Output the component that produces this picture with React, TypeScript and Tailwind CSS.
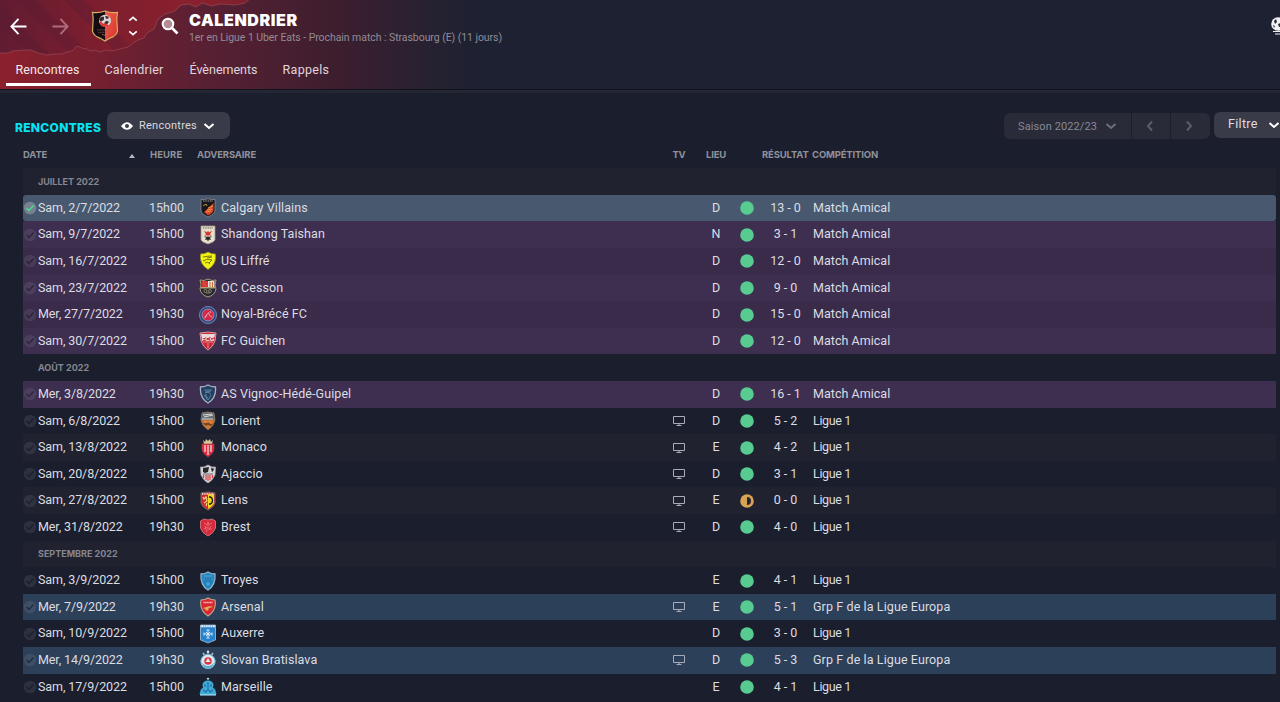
import type { ReactNode } from "react";
import { clsx } from "clsx";

type Tone = "selected" | "friendly" | "europe" | "league";

interface Match {
  date: string;
  time: string;
  club: string;
  tv?: boolean;
  venue: "D" | "E" | "N";
  score: string;
  competition: string;
  tone: Tone;
  draw?: boolean;
}

interface Month {
  label: string;
  /** Position of the month's heading in the striped list. */
  offset: number;
  matches: Match[];
}

const FRIENDLY = "Match Amical";
const LEAGUE = "Ligue 1";
const EUROPA = "Grp F de la Ligue Europa";

const MONTHS: Month[] = [
  {
    label: "JUILLET 2022",
    offset: 0,
    matches: [
      { date: "Sam, 2/7/2022", time: "15h00", club: "Calgary Villains", venue: "D", score: "13 - 0", competition: FRIENDLY, tone: "selected" },
      { date: "Sam, 9/7/2022", time: "15h00", club: "Shandong Taishan", venue: "N", score: "3 - 1", competition: FRIENDLY, tone: "friendly" },
      { date: "Sam, 16/7/2022", time: "15h00", club: "US Liffré", venue: "D", score: "12 - 0", competition: FRIENDLY, tone: "friendly" },
      { date: "Sam, 23/7/2022", time: "15h00", club: "OC Cesson", venue: "D", score: "9 - 0", competition: FRIENDLY, tone: "friendly" },
      { date: "Mer, 27/7/2022", time: "19h30", club: "Noyal-Brécé FC", venue: "D", score: "15 - 0", competition: FRIENDLY, tone: "friendly" },
      { date: "Sam, 30/7/2022", time: "15h00", club: "FC Guichen", venue: "D", score: "12 - 0", competition: FRIENDLY, tone: "friendly" },
    ],
  },
  {
    label: "AOÛT 2022",
    offset: 7,
    matches: [
      { date: "Mer, 3/8/2022", time: "19h30", club: "AS Vignoc-Hédé-Guipel", venue: "D", score: "16 - 1", competition: FRIENDLY, tone: "friendly" },
      { date: "Sam, 6/8/2022", time: "15h00", club: "Lorient", tv: true, venue: "D", score: "5 - 2", competition: LEAGUE, tone: "league" },
      { date: "Sam, 13/8/2022", time: "15h00", club: "Monaco", tv: true, venue: "E", score: "4 - 2", competition: LEAGUE, tone: "league" },
      { date: "Sam, 20/8/2022", time: "15h00", club: "Ajaccio", tv: true, venue: "D", score: "3 - 1", competition: LEAGUE, tone: "league" },
      { date: "Sam, 27/8/2022", time: "15h00", club: "Lens", tv: true, venue: "E", score: "0 - 0", competition: LEAGUE, tone: "league", draw: true },
      { date: "Mer, 31/8/2022", time: "19h30", club: "Brest", tv: true, venue: "D", score: "4 - 0", competition: LEAGUE, tone: "league" },
    ],
  },
  {
    label: "SEPTEMBRE 2022",
    offset: 14,
    matches: [
      { date: "Sam, 3/9/2022", time: "15h00", club: "Troyes", venue: "E", score: "4 - 1", competition: LEAGUE, tone: "league" },
      { date: "Mer, 7/9/2022", time: "19h30", club: "Arsenal", tv: true, venue: "E", score: "5 - 1", competition: EUROPA, tone: "europe" },
      { date: "Sam, 10/9/2022", time: "15h00", club: "Auxerre", venue: "D", score: "3 - 0", competition: LEAGUE, tone: "league" },
      { date: "Mer, 14/9/2022", time: "19h30", club: "Slovan Bratislava", tv: true, venue: "D", score: "5 - 3", competition: EUROPA, tone: "europe" },
      { date: "Sam, 17/9/2022", time: "15h00", club: "Marseille", venue: "E", score: "4 - 1", competition: LEAGUE, tone: "league" },
    ],
  },
];

const SHIELD = "M2 1.5Q5.5 2 9 .8Q12.500 2 16 1.500L16 12Q16 16 9 19Q2 16 2 12Z";

/** Club crests, all drawn on an 18x20 box. */
const CRESTS: Record<string, ReactNode> = {
  "Calgary Villains": (
    <>
      <path d={SHIELD} fill="#17171b" stroke="#85808a" strokeWidth=".9" />
      <path d="M14.500 5V12Q14 15 9 17.500L5 14Z" fill="#d9442d" />
      <path d="M4 3h10" stroke="#b9aeb0" strokeWidth="1.200" strokeDasharray="1 .7" />
      <path d="M4 8l3-2 1 2M9 10l5-2M8 12l5-1M7 14l5-1" stroke="#f2b04a" strokeWidth=".8" fill="none" />
    </>
  ),
  "Shandong Taishan": (
    <>
      <path d="M2 1h14v14l-2 2-5 2-5-2-2-2z" fill="#e7dfcd" stroke="#9b927b" strokeWidth=".8" />
      <path d="M4 3h10" stroke="#4c473f" strokeWidth="1" strokeDasharray="1 .7" />
      <path d="M5 5.500l3 2 1-2 1 2 3-2-2 4 2 1H5l2-1z" fill="#d5342f" />
      <path d="M5 11l3 1 1-1 1 1 3-1-2 2 1 2-2-.5-1 2-1-2-2 .5 1-2z" fill="#292728" />
    </>
  ),
  "US Liffré": (
    <>
      <path d="M1.500 3Q6 3 9 1Q12 3 16.500 3Q18 13 9 18.500Q0 13 1.500 3Z" fill="#f2f215" stroke="#8c8d22" strokeWidth=".8" />
      <path d="M4 6q5-1 9-1M4 10q4-3 9-1l-3 3M6 12q3-2 5 1M8 7l5-1" stroke="#55580d" strokeWidth=".8" fill="none" />
    </>
  ),
  "OC Cesson": (
    <>
      <path d="M1 2l4 .5L9 1l4 1.500L17 2l-1 5 1 4q-1 6-8 8-7-2-8-8l1-4z" fill="#242736" stroke="#a69a73" strokeWidth="1" />
      <path d="M2.500 3H9v6H2.500z" fill="#d93438" />
      <path d="M9 3h6.500v6H9z" fill="#e6dfd5" />
      <path d="M4 4l3 4M11 4v5M13.500 4v5" stroke="#d3643e" />
      <path d="M2 9h14v1.500H2z" fill="#b6a26a" />
      <path d="M5 13a1.500 1.500 0 103 0 1.500 1.500 0 10-3 0M9.500 13a1.500 1.500 0 103 0 1.500 1.500 0 10-3 0M7 15h4" stroke="#a4966b" strokeWidth=".8" fill="none" />
    </>
  ),
  "Noyal-Brécé FC": (
    <>
      <circle cx="9" cy="10" r="8.500" fill="#294780" stroke="#7e91b4" strokeWidth=".9" />
      <circle cx="9" cy="10" r="6" fill="#d52846" stroke="#a9bad1" strokeWidth=".6" />
      <path d="M5.500 12.500l4-5 1 3 3 2M8 10l-2 3M11 6l1 2" stroke="#e7bfcf" strokeWidth=".8" fill="none" />
    </>
  ),
  "FC Guichen": (
    <>
      <path d="M1 2Q9 0 17 2L16 10Q14 16 9 19Q4 16 2 10Z" fill="#cf2638" stroke="#d9b9bc" strokeWidth=".8" />
      <path d="M2 3h14l-.5 3h-13z" fill="#e7dadd" />
      <text x="9" y="9.800" fill="#fff" textAnchor="middle" fontFamily="Liberation Sans, sans-serif" fontSize="6" fontWeight="700">FCG</text>
      <path d="M4 11h10M9 12v5" stroke="#e7a0a5" strokeWidth=".8" />
    </>
  ),
  "AS Vignoc-Hédé-Guipel": (
    <>
      <path d="M1.500 3Q6 3 9 1Q12 3 16.500 3Q17.500 14 9 19Q.5 14 1.500 3Z" fill="#253d5e" stroke="#a4b3c3" strokeWidth="1.300" />
      <path d="M5 6h8M6 8l6-1M6 9q3-2 6 1M7 10v4l2 2 3-5M5 11l4 3" stroke="#618aad" strokeWidth=".9" fill="none" />
    </>
  ),
  Lorient: (
    <>
      <path d="M3 2Q9 0 15 2L16 9Q15 15 9 19Q3 15 2 9Z" fill="#d47128" stroke="#75716c" strokeWidth="1" />
      <path d="M3 2.500Q9 1 15 2.500V9H3z" fill="#686c70" />
      <path d="M4 4l9-1M5 6l9-2M3 8h11" stroke="#d3d6d7" strokeWidth="1.200" />
      <path d="M4 12h4l1-2 2 3h3l-2 2H7z" fill="#7b4524" />
      <path d="M5 11h8M7 15h4" stroke="#e6a260" strokeWidth=".8" />
    </>
  ),
  Monaco: (
    <>
      <path d="M4 2l2 2 1-3 2 2 2-2 1 3 2-2-1 4H5z" fill="#d9c69b" />
      <path d="M3 6h12v5Q15 15 9 19Q3 15 3 11z" fill="#e1283b" stroke="#b43b48" strokeWidth=".7" />
      <path d="M6 7v7M9 7v10M12 7v7" stroke="#f2dfe0" strokeWidth="1.300" />
    </>
  ),
  Ajaccio: (
    <>
      <path d="M1.500 3L5 3 9 1l4 2 3.500 0L16 11Q14 16 9 19Q4 16 2 11Z" fill="#d7d5d7" stroke="#a7a2a7" strokeWidth=".8" />
      <path d="M4 4l6-1-1 5-3 1-2-1z" fill="#24242a" />
      <path d="M12 4l3 1-2 3M4 10h10" stroke="#67666c" />
      <path d="M4.500 11v3M7 11v5M9 11v6M11 11v5M13.500 11v3" stroke="#dd404b" strokeWidth="1.200" />
    </>
  ),
  Lens: (
    <>
      <path d="M2 2Q9 0 16 2V12Q15 16 9 19Q3 16 2 12Z" fill="#d42831" stroke="#77736c" strokeWidth=".9" />
      <path d="M9 3h6v9q-1 3-6 6z" fill="#f1d51e" />
      <path d="M3 3h12" stroke="#d7cfc2" strokeWidth="1.800" strokeDasharray="1 .7" />
      <path d="M4 6l1 2 2-2 1 4-3 2M8 12l-1 3" stroke="#eadb83" strokeWidth="1.200" fill="none" />
      <path d="M10 6h1.500q2 1 2 3.500t-2 3.500H10" fill="none" stroke="#1d1c1f" strokeWidth="1.400" />
    </>
  ),
  Brest: (
    <>
      <path d="M1.500 4L5 2l4 1 4-1 3.500 2V11Q15 16 9 19Q3 16 1.500 11Z" fill="#d7293b" stroke="#ce7881" strokeWidth=".9" />
      <path d="M5 6l3 2 1-3 1 3 3-2M6 9l2 6M9 8v5M12 9l-2 4M5 12l3-2M10 12h3" stroke="#ea7781" strokeWidth=".8" fill="none" />
    </>
  ),
  Troyes: (
    <>
      <path d="M2 3Q6 3 9 1Q12 3 16 3Q17 14 9 19Q1 14 2 3Z" fill="#2383bd" stroke="#8db5ce" strokeWidth="1.300" />
      <path d="M5 5h8M4 8h10M8 12h2v2H8z" stroke="#65aed8" strokeWidth=".9" fill="none" />
      <path d="M6 7l1 2M9 7v2M12 7l-1 2" stroke="#165d90" />
    </>
  ),
  Arsenal: (
    <>
      <path d="M2 3Q6 3 9 1Q12 3 16 3Q18 13 9 19Q0 13 2 3Z" fill="#db2630" stroke="#b9a990" strokeWidth="1.100" />
      <path d="M4.500 5.500h9" stroke="#f2c6c3" strokeWidth="1.500" strokeDasharray="1.200 .4" />
      <path d="M4 11l7-2 3 1-4 1-4 1z" fill="#d9b458" />
      <circle cx="8" cy="12" r="1.700" fill="#d9b458" />
    </>
  ),
  Auxerre: (
    <>
      <path d="M1.500 1h15v15L9 19l-7.500-3z" fill="#2984d0" stroke="#b2cbe2" strokeWidth=".7" />
      <path d="M2 2.300h14" stroke="#e4eaf2" strokeWidth="2" strokeDasharray="2 .4" />
      <path d="M9 6v8M5 10h8M7.500 6h3M7.500 14h3M5 8.500v3M13 8.500v3M7 8l4 4M11 8l-4 4" stroke="#e5f0fa" strokeWidth=".9" />
    </>
  ),
  "Slovan Bratislava": (
    <>
      <path d="M9 0l1.500 2L9 4 7.500 2z" fill="#d5e3e9" />
      <path d="M4 3l1.500 2M14 3l-1.500 2" stroke="#a9c1d1" strokeWidth="1.500" />
      <circle cx="9" cy="11.500" r="7.200" fill="#dbe8ee" stroke="#6db2d0" strokeWidth="1" />
      <path d="M3 12q1 6 6 6t6-6q-2 4-6 4t-6-4" fill="#56a8cc" />
      <circle cx="9" cy="11" r="3.800" fill="#d93843" />
      <path d="M9 8l2.500 4h-5z" fill="#e6edf2" />
    </>
  ),
  Marseille: (
    <>
      <path d="M9 .5l1.500 1.200L9 3 7.500 1.700z" fill="#a8ddf0" />
      <path d="M3.500 8a5.500 4.500 0 0111 0l-.5 3 2 1 1.500 5H.5L2 12l2-1z" fill="#3fa9d7" />
      <path d="M6 7v3M9 5v6M12 7v3M4 13l3 2 2-3 2 3 3-2" stroke="#1e6da0" strokeWidth="1.100" fill="none" />
      <path d="M1 17.800h16" stroke="#8ecde6" strokeWidth="1.600" />
    </>
  ),
};

/** Row backgrounds as [light stripe, dark stripe]. */
const ROW_TONE: Record<Tone, [string, string]> = {
  selected: ["rounded-[3px] bg-[#48596f]", "rounded-[3px] bg-[#48596f]"],
  friendly: ["bg-[#3e2f50]", "bg-[#3a2b4b]"],
  europe: ["bg-[#2d4059]", "bg-[#2d4059]"],
  league: ["bg-[#202230]", ""],
};

const COMPETITION_TRACKING: Record<string, string> = {
  [FRIENDLY]: "tracking-[0.030px]",
  [LEAGUE]: "tracking-[-0.350px]",
  [EUROPA]: "tracking-[0.100px]",
};

function Chevron({ className, d }: { className?: string; d: string }) {
  return (
    <svg viewBox="0 0 12 12" className={className} fill="none" stroke="currentColor" strokeWidth="2" aria-hidden="true">
      <path d={d} />
    </svg>
  );
}

const DOWN = "M1.500 4L6 8l4.500-4";
const UP = "M1.500 8L6 4l4.500 4";
const LEFT = "M8 1.500L4 6l4 4.500";
const RIGHT = "M4 1.500L8 6l-4 4.500";

function ClubBadge() {
  const outline = "M1.500 2.500Q8 3.500 14 1Q20 3.500 26.500 2.500Q25.500 8 26 13L26.500 22Q25 27 19 29L14 32L9 29Q3 27 1.500 22L2 13Q2.500 8 1.500 2.500Z";
  return (
    <svg viewBox="0 0 28 33" preserveAspectRatio="none" className="h-8 w-7 shrink-0" aria-hidden="true">
      <defs>
        <linearGradient id="badge-red" x1="0" y1="0" x2="1" y2="1">
          <stop stopColor="#f0604c" />
          <stop offset="1" stopColor="#d92d27" />
        </linearGradient>
        <clipPath id="badge-clip">
          <path d={outline} />
        </clipPath>
      </defs>
      <g clipPath="url(#badge-clip)">
        <rect width="14" height="33" fill="#120d10" />
        <rect x="14" width="14" height="33" fill="url(#badge-red)" />
      </g>
      <path d={outline} fill="none" stroke="#d3ae63" strokeWidth="1.200" />
      <circle cx="14" cy="11" r="6" fill="#dcd3d4" />
      <path d="M10 7l3 0 0 3-3 2-2-2zM14 6l4 1-1 2-2 0zM15 11l3 1-2 3-3-1z" fill="#3a2c31" />
      <path d="M9 11l3 3 3 0 3 2-4 1.500q-4 0-5-3z" fill="#d93a38" />
      <path d="M6 20.500h16M7 23h14" stroke="#b76762" strokeOpacity=".8" strokeWidth=".8" strokeDasharray="1.500 .7" />
      <path d="M11 25l3 1 3-1" stroke="#d86b5c" strokeWidth=".7" fill="none" />
    </svg>
  );
}

/** Torn paper strip behind the title bar, tinted with the club colours. */
function HeaderBackdrop() {
  const edge = "0,53 8,53 13,51 25,50 31,50 38,53 47,55 55,54 62,54 67,52 72,51 77,46 82,48 87,49 90,51 95,50 99,52 106,50 112,51 120,49 128,47 133,43 138,40 144,38 147,33 154,29 158,19 165,14 175,11 181,5 189,4 196,7 202,3 212,6 220,4 236,5 245,3 251,-2";
  return (
    <svg viewBox="0 0 470 89" preserveAspectRatio="none" className="absolute top-0 left-0 h-[89px] w-[470px]" aria-hidden="true">
      <defs>
        <linearGradient id="header-fade">
          <stop stopColor="#8b202d" />
          <stop offset=".2" stopColor="#762030" />
          <stop offset=".45" stopColor="#572033" />
          <stop offset=".72" stopColor="#3c1e2e" />
          <stop offset=".9" stopColor="#282131" />
          <stop offset="1" stopColor="#1e2131" />
        </linearGradient>
        <linearGradient id="torn-red">
          <stop stopColor="#601c31" />
          <stop offset=".35" stopColor="#7c1e2e" />
          <stop offset=".75" stopColor="#8a202d" />
          <stop offset="1" stopColor="#7a2030" />
        </linearGradient>
        <clipPath id="torn-clip">
          <polygon points={`0,-2 ${edge}`} />
        </clipPath>
      </defs>
      <rect width="470" height="89" fill="url(#header-fade)" />
      <g clipPath="url(#torn-clip)">
        <rect width="260" height="60" fill="url(#torn-red)" />
        <path d="M-10 5L45 60M14 -12L90 64M64 -10L128 54" stroke="#521c35" strokeOpacity=".28" strokeWidth="14" />
      </g>
      <polyline points={edge} fill="none" stroke="#a04e5d" strokeOpacity=".6" strokeWidth="1" />
    </svg>
  );
}

function NavArrow({ back }: { back?: boolean }) {
  return (
    <svg viewBox="0 0 18 18" className={clsx("size-[17px]", back ? "text-white" : "text-[#ad6e7c]")} fill="none" stroke="currentColor" strokeWidth="2" aria-hidden="true">
      <path d={back ? "M17.500 9H2M9 1L1.500 9L9 17" : "M.5 9h15.500M9 1l7.500 8L9 17"} />
    </svg>
  );
}

const TABS = [
  { label: "Rencontres", className: "ml-1.5 w-[85px] pr-0.5 tracking-[0.100px]", active: true },
  { label: "Calendrier", className: "w-[86px] tracking-[0.250px]" },
  { label: "Évènements", className: "w-[92px] pl-px tracking-normal" },
  { label: "Rappels", className: "w-[73px] pl-px tracking-[0.300px]" },
];

function Header() {
  return (
    <header className="relative h-[89px] overflow-hidden bg-[#1e2131]">
      <HeaderBackdrop />
      <div className="relative flex h-[52px] items-center">
        <div className="flex flex-1 items-center">
          <div className="ml-2.5 w-[42px]">
            <NavArrow back />
          </div>
          <div className="w-[39px]">
            <NavArrow />
          </div>
          <ClubBadge />
          <div className="ml-2 flex w-3 flex-col items-center gap-1">
            <Chevron d={UP} className="h-2.5 w-3 text-white" />
            <Chevron d={DOWN} className="h-2.5 w-3 text-white" />
          </div>
          <svg viewBox="0 0 18 18" className="ml-[22px] size-[18px]" aria-hidden="true">
            <circle cx="7" cy="7" r="5.300" fill="#b58c95" stroke="#fff" strokeWidth="2" />
            <path d="M11 11l5.500 5.500" stroke="#fff" strokeWidth="2.600" />
          </svg>
          <div className="ml-2.5 pt-1">
            <h1 className="font-['Inter',sans-serif] text-[16px] leading-[19px] font-black tracking-[0.600px] text-white">CALENDRIER</h1>
            <p className="text-[10.500px] leading-[15px] tracking-[-0.060px] whitespace-nowrap text-[#928b97]">
              1er en Ligue 1 Uber Eats - Prochain match : Strasbourg (E) (11 jours)
            </p>
          </div>
        </div>
        <svg viewBox="0 0 18 18" className="-mr-2 size-[18px] shrink-0" aria-hidden="true">
          <circle cx="8" cy="7" r="6.800" fill="#f2f2f4" />
          <path d="M4 4l2-2 1 3-2 2zM8 7l3-1 1 3-3 1zM3 8l2 1-1 2z" fill="#252734" />
          <path d="M3 14.500h10M5 17h6" stroke="#f2f2f4" strokeWidth="1.200" />
        </svg>
      </div>
      <nav className="relative flex h-[37px]">
        {TABS.map((tab) => (
          <a
            key={tab.label}
            className={clsx(
              "flex h-[34px] items-center justify-center border-b-[3px] pt-1.5 text-[12.500px]",
              tab.active ? "border-white text-[#f4e8eb]" : "border-transparent text-[#e0d5dc]",
              tab.className,
            )}
          >
            {tab.label}
          </a>
        ))}
      </nav>
    </header>
  );
}

function Toolbar() {
  return (
    <div className="flex h-[52px] items-start pt-[22px] pl-[15px]">
      <h2 className="mt-2 w-[92px] font-['Inter',sans-serif] text-[12px] leading-4 font-extrabold tracking-[0.300px] whitespace-nowrap text-[#08e3f3]">
        RENCONTRES
      </h2>
      <button className="flex h-[27px] w-[123px] items-center rounded-[7px] bg-[#393b49] pl-3.5 text-[11px] text-[#d8d8dd]">
        <svg viewBox="0 0 14 10" className="mr-1.5 h-2.5 w-3" aria-hidden="true">
          <path d="M0 5Q7-4 14 5Q7 14 0 5Z" fill="#fff" />
          <circle cx="7" cy="5" r="2.300" fill="#393b49" />
        </svg>
        <span className="w-[63px] pt-0.5 text-left tracking-[0.250px]">Rencontres</span>
        <Chevron d={DOWN} className="ml-px size-3 text-white" />
      </button>
      <div className="flex-1" />
      <div className="mt-px mr-1 flex h-[26px] gap-px overflow-hidden rounded-[6px] text-[11px] text-[#888994]">
        <button className="flex w-[127px] items-center bg-[#292b39] pl-3.5">
          <span className="w-[87px] pt-0.5 text-left tracking-[0.100px]">Saison 2022/23</span>
          <Chevron d={DOWN} className="size-3 text-[#6c6e7a]" />
        </button>
        <button className="flex w-[38px] items-center justify-center bg-[#292b39] pr-0.5 text-[#5b5d6a]">
          <Chevron d={LEFT} className="size-3" />
        </button>
        <button className="flex w-[39px] items-center justify-center bg-[#292b39] pr-1 text-[#5b5d6a]">
          <Chevron d={RIGHT} className="size-3" />
        </button>
      </div>
      <button className="flex h-[26px] w-[66px] items-center rounded-l-[6px] bg-[#393b49] pl-3.5 text-[12.500px] text-[#dedee3]">
        <span className="w-10 pb-0.5 text-left tracking-[0.300px]">Filtre</span>
        <Chevron d={DOWN} className="size-3 shrink-0 text-white" />
      </button>
    </div>
  );
}

function TableHead() {
  return (
    <div className="ml-[23px] grid h-[26px] grid-cols-[127px_47px_467px_30px_46px_23px_50px_1fr] items-center pt-px font-['Inter',sans-serif] text-[9.500px] font-bold tracking-[-0.150px] text-[#8f919b]">
      <span className="flex items-center justify-between pr-[15px]">
        DATE
        <svg viewBox="0 0 6 4" className="h-1 w-1.5" aria-hidden="true">
          <path d="M3 0l3 4H0z" fill="#b7b8c0" />
        </svg>
      </span>
      <span className="tracking-[0.100px]">HEURE</span>
      <span>ADVERSAIRE</span>
      <span className="text-center">TV</span>
      <span className="pr-0.5 text-center">LIEU</span>
      <span />
      <span className="-ml-px">RÉSULTAT</span>
      <span className="-ml-px">COMPÉTITION</span>
    </div>
  );
}

function CheckMark({ done }: { done: boolean }) {
  return (
    <svg viewBox="0 0 14 14" className="size-3.5" fill="none" aria-hidden="true">
      <circle cx="7" cy="7" r="6.300" className={done ? "fill-[#778291]" : "fill-[#b2b5bd]/12"} />
      <path d="M3.500 7l2.500 2.500 4.500-5" strokeWidth="1.500" className={done ? "stroke-[#44df92]" : "stroke-[#111420]/55"} />
    </svg>
  );
}

function MatchRow({ match, light }: { match: Match; light: boolean }) {
  return (
    <div
      className={clsx(
        "grid h-[26.600px] grid-cols-[15px_111px_49px_23px_444px_28px_46px_19px_55px_1fr] items-center text-[12.500px] whitespace-nowrap text-[#dcdde2]",
        ROW_TONE[match.tone][light ? 0 : 1],
      )}
    >
      <CheckMark done={match.tone === "selected"} />
      <span className="tracking-[-0.100px]">{match.date}</span>
      <span>{match.time}</span>
      <svg viewBox="0 0 18 20" preserveAspectRatio="none" className="ml-px h-5 w-[18px]" aria-hidden="true">
        {CRESTS[match.club]}
      </svg>
      <span className="tracking-[0.080px]">{match.club}</span>
      <span className="flex justify-center">
        {match.tv && (
          <svg viewBox="0 0 12 10" className="h-2.5 w-3" fill="none" stroke="#a9abb6" aria-hidden="true">
            <path d="M.5 .5h11v7H.5zM6 7.500v2M3.500 9.500h5" />
          </svg>
        )}
      </span>
      <span className="text-center">{match.venue}</span>
      <svg viewBox="0 0 14 14" className="ml-px size-3.5" aria-hidden="true">
        <circle cx="7" cy="7" r="6.800" fill={match.draw ? "#d9a354" : "#57cb90"} />
        {match.draw && <path d="M7 3a4 4 0 010 8z" fill="#282532" />}
      </svg>
      <span className="text-center">{match.score}</span>
      <span className={COMPETITION_TRACKING[match.competition]}>{match.competition}</span>
    </div>
  );
}

export default function App() {
  return (
    <div className="h-[702px] w-[1280px] overflow-hidden bg-[#1b1e2c] font-['Roboto',sans-serif]">
      <Header />
      <div className="h-px bg-[#11131d]" />
      <div className="h-[3px] bg-[#242633]" />
      <main className="-mt-[3px]">
        <Toolbar />
        <TableHead />
        <div className="mt-[0.300px] mr-1 ml-[23px]">
          {MONTHS.map((month) => (
            <section key={month.label}>
              <h3
                className={clsx(
                  "flex h-[26.600px] items-center pl-[15px] font-['Inter',sans-serif] text-[9px] font-bold text-[#858690]",
                  month.offset % 2 === 0 && "bg-[#202230]",
                )}
              >
                {month.label}
              </h3>
              {month.matches.map((match, index) => (
                <MatchRow key={match.date} match={match} light={(month.offset + index + 1) % 2 === 0} />
              ))}
            </section>
          ))}
        </div>
      </main>
    </div>
  );
}
